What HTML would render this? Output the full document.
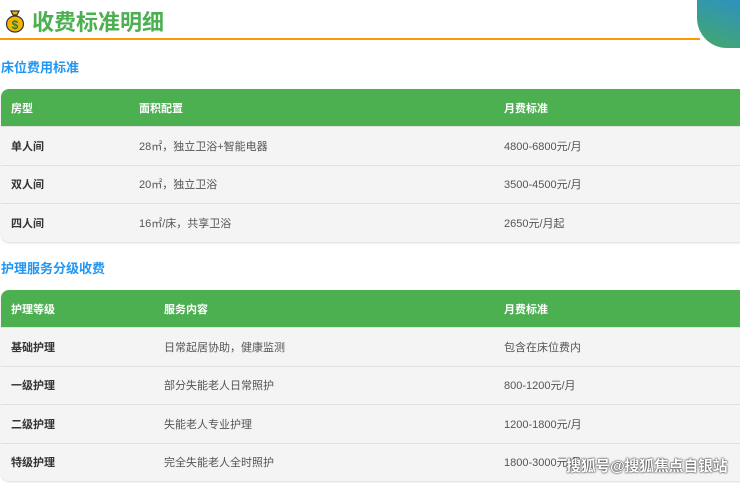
<!DOCTYPE html>
<html><head><meta charset="utf-8"><style>
*{margin:0;padding:0;box-sizing:border-box}
body{width:740px;height:483px;overflow:hidden;background:#fff;font-family:"Liberation Sans","Noto Sans CJK SC",sans-serif;position:relative}
.blob{position:absolute;left:697px;top:-2px;width:60px;height:50px;border-bottom-left-radius:30px;background:linear-gradient(200deg,#2a8fc9,#45a86a)}
.title{position:absolute;left:4px;top:5px;font-size:22px;font-weight:bold;color:#4caf50;display:flex;align-items:center;gap:6px}
.line{position:absolute;left:0;top:38px;width:700px;height:2px;background:#ff9800}
.sec{position:absolute;left:1px;font-size:13px;font-weight:bold;color:#2196f3}
table{position:absolute;left:1px;width:745px;border-collapse:separate;border-spacing:0;font-size:11px;border-radius:8px;overflow:hidden;box-shadow:0 1px 2px rgba(0,0,0,.15)}
th{background:#4caf50;color:#fff;text-align:left;font-weight:bold;height:37px;padding-left:10px}
td{background:#f4f4f4;color:#555;height:38.5px;padding-left:10px;border-top:1px solid #e0e0e0}
td:first-child{font-weight:bold;color:#333}
.wm{position:absolute;left:566px;top:455px;font-size:15px;color:#fff;font-weight:bold;white-space:nowrap;letter-spacing:-0.3px;text-shadow:0 0 2px #333,0 0 1px #000}
</style></head><body>
<div class="blob"></div>
<div class="title"><svg width="22" height="24" viewBox="0 0 22 24"><path d="M7 2h8l-2 4h-4z" fill="#f4b400" stroke="#333" stroke-width="1.2"/><ellipse cx="11" cy="15" rx="8.5" ry="8" fill="#f4b400" stroke="#333" stroke-width="1.2"/><text x="11" y="20" font-size="12" text-anchor="middle" fill="#2e7d32" font-weight="bold">$</text></svg>收费标准明细</div>
<div class="line"></div>
<div class="sec" style="top:57px">床位费用标准</div>
<table style="top:89px">
<tr><th style="width:128px">房型</th><th style="width:365px">面积配置</th><th>月费标准</th></tr>
<tr><td>单人间</td><td>28㎡，独立卫浴+智能电器</td><td>4800-6800元/月</td></tr>
<tr><td>双人间</td><td>20㎡，独立卫浴</td><td>3500-4500元/月</td></tr>
<tr><td>四人间</td><td>16㎡/床，共享卫浴</td><td>2650元/月起</td></tr>
</table>
<div class="sec" style="top:258px">护理服务分级收费</div>
<table style="top:290px">
<tr><th style="width:153px">护理等级</th><th style="width:340px">服务内容</th><th>月费标准</th></tr>
<tr><td>基础护理</td><td>日常起居协助，健康监测</td><td>包含在床位费内</td></tr>
<tr><td>一级护理</td><td>部分失能老人日常照护</td><td>800-1200元/月</td></tr>
<tr><td>二级护理</td><td>失能老人专业护理</td><td>1200-1800元/月</td></tr>
<tr><td>特级护理</td><td>完全失能老人全时照护</td><td>1800-3000元/月</td></tr>
</table>
<div class="wm">搜狐号@搜狐焦点自银站</div>
</body></html>
